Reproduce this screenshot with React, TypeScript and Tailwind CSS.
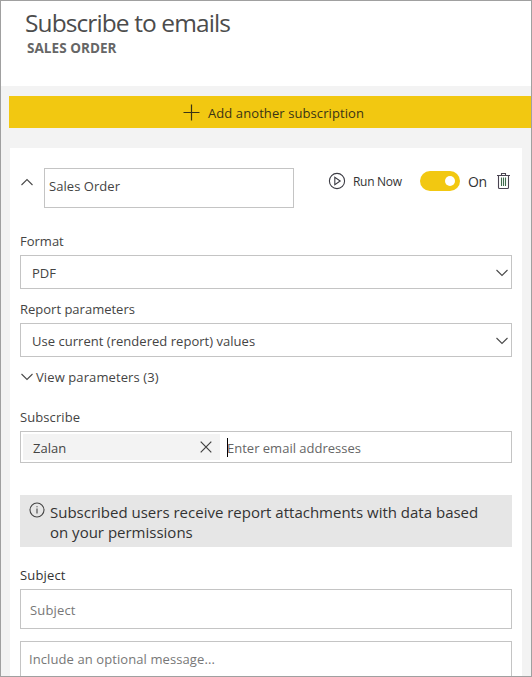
import React from "react";

type IconProps = { className?: string };

const Plus = () => (
  <svg width="17" height="17" viewBox="0 0 17 17" fill="none" stroke="#3a3416" strokeWidth="1.2">
    <path d="M0.5 8.5H16.5M8.5 0.5V16.5" />
  </svg>
);

const Chevron = ({ className = "" }: IconProps) => (
  <svg className={className} width="12" height="8" viewBox="0 0 12 8" fill="none" stroke="#4a4a4a" strokeWidth="1.1">
    <path d="M0.5 1L6 6.5L11.5 1" />
  </svg>
);

const Play = () => (
  <svg width="18" height="18" viewBox="0 0 18 18" fill="none" stroke="#3c3c44" strokeWidth="1.1">
    <circle cx="9" cy="9" r="7.6" />
    <path d="M6.8 5.4V12.6L12.2 9Z" />
  </svg>
);

const Trash = () => (
  <svg width="13" height="17" viewBox="0 0 13 17" fill="none" stroke="#4a4452" strokeWidth="1.1">
    <path d="M0 2.5H13M4.5 2.5V0.5H8.5V2.5M1.5 2.5V14.5Q1.5 15.5 2.5 15.5H10.5Q11.5 15.5 11.5 14.5V2.5" />
    <path d="M4.5 4.5V13M6.5 4.5V13M8.5 4.5V13" stroke="#3f6a4c" />
  </svg>
);

const Close = () => (
  <svg width="12" height="12" viewBox="0 0 12 12" fill="none" stroke="#404040" strokeWidth="1.2">
    <path d="M0.7 0.7L11.3 11.3M11.3 0.7L0.7 11.3" />
  </svg>
);

const Info = () => (
  <svg width="16" height="16" viewBox="0 0 16 16" fill="none" stroke="#444" strokeWidth="1.1">
    <circle cx="8" cy="8" r="7" />
    <path d="M8 6.6V11.5M8 4.2V5.3" />
  </svg>
);

function Select({ value }: { value: string }) {
  return (
    <div className="flex h-[34px] items-center justify-between border border-[#c4c4c4] pr-[3px] pl-[11px]">
      <span className="pt-[2px] tracking-[0.03px]">{value}</span>
      <Chevron className="mt-[2px]" />
    </div>
  );
}

export default function App() {
  return (
    <div className="flex h-[677px] w-[532px] flex-col overflow-hidden border border-[#a0a0a0] bg-[#f3f3f3] font-['Open_Sans',sans-serif] text-[13px] leading-5 whitespace-nowrap text-[#444]">
      <header className="h-[85px] shrink-0 bg-white pt-[6px] pl-6">
        <h1 className="text-[24.5px] leading-8 tracking-[-0.9px] text-[#4c4c4c]">Subscribe to emails</h1>
        <h2 className="pl-[2px] text-[13.5px] leading-[18px] font-bold tracking-[0.05px] text-[#666]">SALES ORDER</h2>
      </header>

      <button className="mt-[10px] ml-2 flex h-8 shrink-0 items-center bg-[#f2c811] pl-[174px] text-[#3a3416]">
        <Plus />
        <span className="pt-[2px] pl-2 tracking-[0.09px]">Add another subscription</span>
      </button>

      <main className="mt-5 mr-[9px] ml-[9px] flex flex-1 flex-col bg-white px-[10px] pt-5">
        <div className="flex h-10 shrink-0">
          <Chevron className="mt-[10px] ml-[1px] rotate-180" />
          <div className="ml-[11px] w-[250px] border border-[#c4c4c4] pt-[7px] pl-1">
            <span className="tracking-[0.05px]">Sales Order</span>
          </div>
          <div className="ml-[34px] flex h-[26px] items-center text-[#333]">
            <Play />
            <span className="ml-[7px] w-[50px] pt-[2px] text-[12px] tracking-[-0.3px]">Run Now</span>
          </div>
          <div className="ml-[17px] flex h-[26px] items-center text-[#333]">
            <div className="flex h-5 w-10 items-center justify-end rounded-full bg-[#f2c811] pr-[5px]">
              <div className="size-[10px] rounded-full bg-white" />
            </div>
            <span className="ml-2 w-[29px] pt-[2px] text-[14px] tracking-[-0.3px]">On</span>
            <Trash />
          </div>
        </div>

        <label className="mt-[23px] mb-1 shrink-0">Format</label>
        <Select value="PDF" />
        <label className="mt-[10px] mb-1 shrink-0">Report parameters</label>
        <Select value="Use current (rendered report) values" />

        <div className="mt-[10px] flex h-5 shrink-0 items-center">
          <Chevron className="ml-[1px]" />
          <span className="ml-[3px] tracking-[0.1px]">View parameters (3)</span>
        </div>

        <label className="mt-5 mb-1 shrink-0 tracking-[0.08px]">Subscribe</label>
        <div className="flex h-8 shrink-0 items-center border border-[#c4c4c4] pl-[2px]">
          <div className="flex h-[26px] w-[197px] items-center justify-between bg-[#f3f3f3] pr-2 pl-[10px]">
            <span className="pt-[2px]">Zalan</span>
            <Close />
          </div>
          <div className="ml-[7px] h-[19px] w-px bg-black" />
          <span className="-ml-px pt-[2px] text-[#666]">Enter email addresses</span>
        </div>

        <div className="mt-8 flex h-[52px] shrink-0 bg-[#e6e6e6] pt-[7px] pl-[8.5px] text-[#333]">
          <div>
            <Info />
          </div>
          <p className="pl-[5.5px] text-[15px] leading-5">
            Subscribed users receive report attachments with data based
            <br />
            on your permissions
          </p>
        </div>

        <label className="mt-[18px] mb-1 shrink-0 tracking-[0.15px] text-[#333]">Subject</label>
        <div className="flex h-10 shrink-0 items-center border border-[#c4c4c4] pl-[9px] text-[#777]">
          <span className="pt-[2px] tracking-[0.15px]">Subject</span>
        </div>
        <div className="mt-3 flex-1 border border-b-0 border-[#c4c4c4] pt-[7px] pl-2 tracking-[0.09px] text-[#777]">
          Include an optional message...
        </div>
      </main>
    </div>
  );
}
